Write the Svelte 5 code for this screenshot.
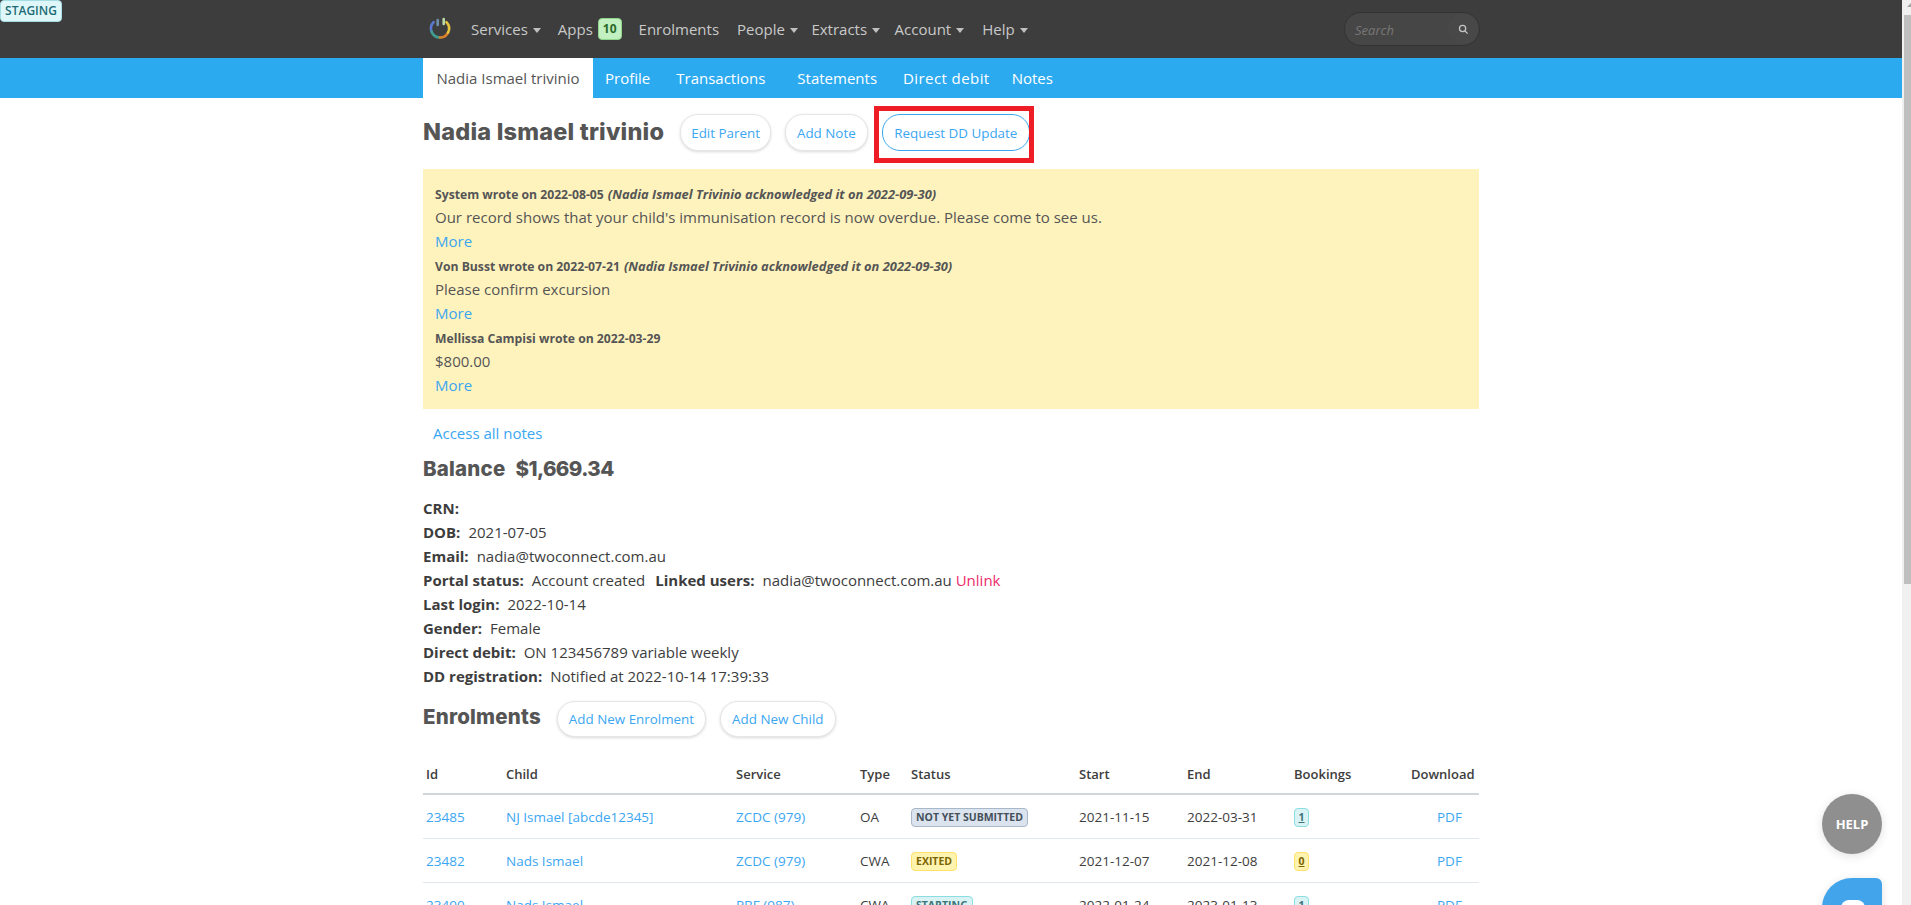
<script>
  const navItems = [
    { label: 'Services', caret: true },
    { label: 'Apps', badge: '10' },
    { label: 'Enrolments' },
    { label: 'People', caret: true },
    { label: 'Extracts', caret: true },
    { label: 'Account', caret: true },
    { label: 'Help', caret: true }
  ];
  const tabs = ['Profile', 'Transactions', 'Statements', 'Direct debit', 'Notes'];
  const notes = [
    { head: 'System wrote on 2022-08-05', ack: '(Nadia Ismael Trivinio acknowledged it on 2022-09-30)', body: "Our record shows that your child's immunisation record is now overdue. Please come to see us." },
    { head: 'Von Busst wrote on 2022-07-21', ack: '(Nadia Ismael Trivinio acknowledged it on 2022-09-30)', body: 'Please confirm excursion' },
    { head: 'Mellissa Campisi wrote on 2022-03-29', ack: '', body: '$800.00' }
  ];
  const rows = [
    { id: '23485', child: 'NJ Ismael [abcde12345]', service: 'ZCDC (979)', type: 'OA', status: 'NOT YET SUBMITTED', tone: 'grey', start: '2021-11-15', end: '2022-03-31', bookings: '1', btone: 'teal' },
    { id: '23482', child: 'Nads Ismael', service: 'ZCDC (979)', type: 'CWA', status: 'EXITED', tone: 'yellow', start: '2021-12-07', end: '2021-12-08', bookings: '0', btone: 'yellow' },
    { id: '23490', child: 'Nads Ismael', service: 'PBF (987)', type: 'CWA', status: 'STARTING', tone: 'teal', start: '2022-01-24', end: '2023-01-13', bookings: '1', btone: 'teal' }
  ];
</script>

<div class="page">
  <div class="viewport">
    <header class="topbar">
      <div class="wrap topinner">
        <nav class="mainnav">
          <svg class="logo" viewBox="0 0 30 30" width="30" height="30" fill="none" stroke-width="2.6" stroke-linecap="round">
            <path d="M8.6 8.1 A9 9 0 0 0 6.5 17.5" stroke="#5a78cf"/>
            <path d="M6.5 17.5 A9 9 0 0 0 15 23.5" stroke="#3f9c8f"/>
            <path d="M15 23.5 A9 9 0 0 0 23 18.6" stroke="#d9802b"/>
            <path d="M23 18.6 A9 9 0 0 0 21.4 8.1" stroke="#e6c43c"/>
            <path d="M12.7 6 V11" stroke="#6f8fa8"/>
            <path d="M18.7 5 V10" stroke="#b9d8a8"/>
          </svg>
          {#each navItems as item}
            <span class="navitem">
              {item.label}
              {#if item.badge}<b class="appbadge">{item.badge}</b>{/if}
              {#if item.caret}<i class="caret"></i>{/if}
            </span>
          {/each}
        </nav>
        <div class="search">
          <span class="searchtext">Search</span>
          <span class="searchbtn">
            <svg viewBox="0 0 12 12" width="11" height="11" fill="none" stroke="#c4c4c4" stroke-width="1.4"><circle cx="5" cy="5" r="3.4"/><path d="M7.6 7.6 L10.5 10.5"/></svg>
          </span>
        </div>
      </div>
    </header>

    <div class="subbar">
      <div class="wrap tabs">
        <span class="tab active">Nadia Ismael trivinio</span>
        {#each tabs as t}<span class="tab">{t}</span>{/each}
      </div>
    </div>

    <main class="wrap content">
      <div class="titlerow">
        <h1>Nadia Ismael trivinio</h1>
        <button class="pill">Edit Parent</button>
        <button class="pill note">Add Note</button>
        <span class="marked">
          <button class="pill focus">Request DD Update</button>
          <span class="redbox"></span>
        </span>
      </div>

      <section class="notes">
        {#each notes as n}
          <div class="nhead"><strong>{n.head}</strong>{#if n.ack}<em>{n.ack}</em>{/if}</div>
          <div class="nbody">{n.body}</div>
          <a class="link nmore" href="#more">More</a>
        {/each}
      </section>

      <a class="link allnotes" href="#notes">Access all notes</a>
      <h2 class="balance"><span class="ballabel">Balance</span><span class="balvalue">$1,669.34</span></h2>

      <dl class="info">
        <div><dt>CRN:</dt></div>
        <div><dt>DOB:</dt><dd>2021-07-05</dd></div>
        <div><dt>Email:</dt><dd>nadia@twoconnect.com.au</dd></div>
        <div><dt>Portal status:</dt><dd>Account created</dd><dt>Linked users:</dt><dd>nadia@twoconnect.com.au <a class="unlink" href="#unlink">Unlink</a></dd></div>
        <div><dt>Last login:</dt><dd>2022-10-14</dd></div>
        <div><dt>Gender:</dt><dd>Female</dd></div>
        <div><dt>Direct debit:</dt><dd>ON 123456789 variable weekly</dd></div>
        <div><dt>DD registration:</dt><dd>Notified at 2022-10-14 17:39:33</dd></div>
      </dl>

      <div class="enrolhead">
        <h2>Enrolments</h2>
        <button class="pill">Add New Enrolment</button>
        <button class="pill">Add New Child</button>
      </div>

      <table>
        <colgroup>
          <col class="c1"/><col class="c2"/><col class="c3"/><col class="c4"/>
          <col class="c5"/><col class="c6"/><col class="c7"/><col class="c8"/><col class="c9"/>
        </colgroup>
        <thead>
          <tr><th>Id</th><th>Child</th><th>Service</th><th>Type</th><th>Status</th><th>Start</th><th>End</th><th>Bookings</th><th>Download</th></tr>
        </thead>
        <tbody>
          {#each rows as r}
            <tr>
              <td><a class="link" href="#id">{r.id}</a></td>
              <td><a class="link" href="#child">{r.child}</a></td>
              <td><a class="link" href="#service">{r.service}</a></td>
              <td>{r.type}</td>
              <td><span class="tag {r.tone}">{r.status}</span></td>
              <td>{r.start}</td>
              <td>{r.end}</td>
              <td><span class="tag count {r.btone}"><u>{r.bookings}</u></span></td>
              <td class="pdf"><a class="link" href="#pdf">PDF</a></td>
            </tr>
          {/each}
        </tbody>
      </table>
    </main>
  </div>
  <div class="scrollbar"><i class="arrow"></i><i class="thumb"></i></div>

  <span class="staging">STAGING</span>
  <span class="help">HELP</span>
  <span class="chat"><i></i></span>
</div>

<style>
  :global(body) { margin: 0; background: #fff; }
  .page { position: relative; display: flex; height: 905px; overflow: hidden; font-family: "Open Sans", "Noto Sans", sans-serif; font-size: 15px; line-height: 24px; color: #3d3d3d; }
  .viewport { flex: 1; min-width: 0; }
  .scrollbar { display: flex; flex-direction: column; width: 9px; background: #f0f0f0; }
  .arrow { width: 0; height: 0; margin: 3px 0 8px 5px; border-left: 4px solid transparent; border-bottom: 4px solid #a3a3a3; }
  .thumb { height: 569px; margin-left: 2px; background: #bfbfbf; }
  .wrap { width: 1056px; margin-left: 423px; }

  .topbar { height: 58px; background: #3d3d3d; }
  .topinner { display: flex; align-items: center; justify-content: space-between; height: 58px; width: 1057px; }
  .mainnav { display: flex; align-items: center; gap: 17px; color: #c9c9c9; font-size: 15px; margin-left: 2px; }
  .logo { margin-right: -1px; }
  .navitem { display: flex; align-items: center; gap: 5px; }
  .navitem:nth-child(4) { margin-right: 1px; }
  .navitem:nth-child(5) { margin-right: -3.5px; }
  .navitem:nth-child(6) { margin-right: -2.5px; }
  .navitem:nth-child(7) { margin-right: 1px; }
  .appbadge { background: #c3f0c0; color: #2a6b2a; border: 1px solid #8fd58c; border-radius: 4px; font-size: 12px; line-height: 20px; padding: 0 4px; }
  .caret { width: 0; height: 0; border-left: 4px solid transparent; border-right: 4px solid transparent; border-top: 5px solid #c0c0c0; margin-top: 2px; }
  .search { display: flex; align-items: center; justify-content: space-between; width: 136px; height: 34px; box-sizing: border-box; background: #464646; border: 1px solid #333; border-radius: 17px; }
  .searchtext { font-style: italic; font-size: 13px; color: #777; margin: 2px 0 0 10px; }
  .searchbtn { display: flex; align-items: center; justify-content: center; width: 30px; height: 30px; border-radius: 50%; background: #484848; margin-right: 1px; }

  .subbar { height: 40px; background: #2caaf0; }
  .tabs { display: flex; height: 40px; }
  .tab { color: #fff; font-size: 15px; line-height: 40px; padding: 0 13px; }
  .tab.active { background: #fff; color: #555; width: 144px; margin-right: -1px; text-align: center; }
  .tab:nth-child(4) { margin-left: 6px; }
  .tab:nth-child(5) { letter-spacing: .42px; }
  .tab:nth-child(6) { margin-left: -4px; }

  .titlerow { display: flex; align-items: center; gap: 14px; height: 37px; margin-top: 16px; }
  h1 { margin: 0 2px 0 0; padding-bottom: 2px; font: 800 23.5px/35px Inter, sans-serif; letter-spacing: .2px; color: #555; }
  h2 { margin: 0; font: 800 20.5px/36px Inter, sans-serif; letter-spacing: .2px; color: #555; }
  .pill { height: 37px; padding: 0 10px; background: #fff; border: 1px solid #e6e6e6; border-radius: 18px; box-shadow: 0 1px 3px rgba(0,0,0,.15); color: #3ba6f2; font: 13.4px "Open Sans", sans-serif; }
  .pill.note { padding: 0 11px; }
  .pill.focus { border-color: #3aa8ee; box-shadow: none; display: block; padding: 0 11.5px; }
  .marked { position: relative; display: block; }
  .redbox { position: absolute; left: -8px; top: -8px; right: -4px; bottom: -12px; border: 5px solid #ee1c25; }

  .notes { margin-top: 18px; padding: 13px 11px 11px 12px; height: 240px; box-sizing: border-box; background: #fff3bd; color: #555; font-size: 15px; }
  .nhead { height: 24px; font-size: 12.9px; font-weight: 700; color: #555; }
  .nhead strong { font-size: 12.2px; font-weight: 700; }
  .nhead em { margin-left: 4px; font-style: italic; }
  .nbody, .nmore { display: block; line-height: 22px; padding-bottom: 2px; }
  .link { color: #3ba6f2; text-decoration: none; }
  .allnotes { display: block; margin: 12px 0 0 10px; font-size: 15px; }
  .balance { display: flex; gap: 10px; margin-top: 6px; line-height: 36px; }
  .balvalue { letter-spacing: -.6px; }
  .info { margin: 9px 0 0; color: #3d3d3d; }
  .info div { display: flex; gap: 8px; height: 24px; }
  .info dt { font-weight: 700; }
  .info dd { margin: 0; }
  .info dd + dt { margin-left: 2px; }
  .unlink { color: #ee2a6b; text-decoration: none; }

  .enrolhead { display: flex; align-items: center; gap: 14px; height: 36px; margin-top: 13px; }
  .enrolhead .pill { height: 36px; padding: 0 11px; }
  .enrolhead h2 { margin-right: 2px; padding-bottom: 4px; line-height: 32px; }

  table { width: 1056px; margin-top: 18px; border-collapse: collapse; table-layout: fixed; font-size: 13.5px; }
  .c1 { width: 80px; } .c2 { width: 230px; } .c3 { width: 124px; } .c4 { width: 51px; } .c5 { width: 168px; }
  .c6 { width: 108px; } .c7 { width: 107px; } .c8 { width: 117px; } .c9 { width: 71px; }
  th { text-align: left; font-size: 13px; font-weight: 600; height: 37px; padding: 0 3px 1px; border-bottom: 2px solid #d3d6d9; }
  td { height: 43px; padding: 0 3px; border-bottom: 1px solid #e2e8ee; white-space: nowrap; }
  .pdf { padding-left: 29px; }
  .tag { display: inline-block; font-size: 10.5px; font-weight: 700; line-height: 17px; padding: 0 4px; border: 1px solid; border-radius: 4px; vertical-align: middle; }
  .tag.grey { background: #dbe4ee; border-color: #a9b8c8; color: #444f5a; }
  .tag.yellow { background: #fff3b0; border-color: #ffe26a; color: #7a6500; }
  .tag.teal { background: #d9f3f5; border-color: #8adde0; color: #3d7478; }
  .count { padding: 0 3.5px; }

  .staging { position: absolute; left: 0; top: 0; box-sizing: border-box; width: 62px; height: 22px; background: #e0f7fa; border: 1px solid #a3dde3; border-radius: 4px; color: #1d6b73; font-size: 12px; font-weight: 600; line-height: 20px; text-align: center; }
  .help { position: absolute; left: 1822px; top: 794px; width: 60px; height: 60px; border-radius: 50%; background: #8f8f8f; color: #fff; font-weight: 700; font-size: 13px; line-height: 60px; text-align: center; box-shadow: 0 2px 10px rgba(0,0,0,.12); }
  .chat { position: absolute; left: 1822px; top: 878px; width: 60px; height: 60px; background: #42a5eb; border-radius: 30px 6px 30px 30px; box-shadow: 0 2px 10px rgba(0,0,0,.12); }
  .chat i { position: absolute; left: 19px; top: 22px; width: 24px; height: 20px; border-radius: 8px; background: #fff; }
</style>
